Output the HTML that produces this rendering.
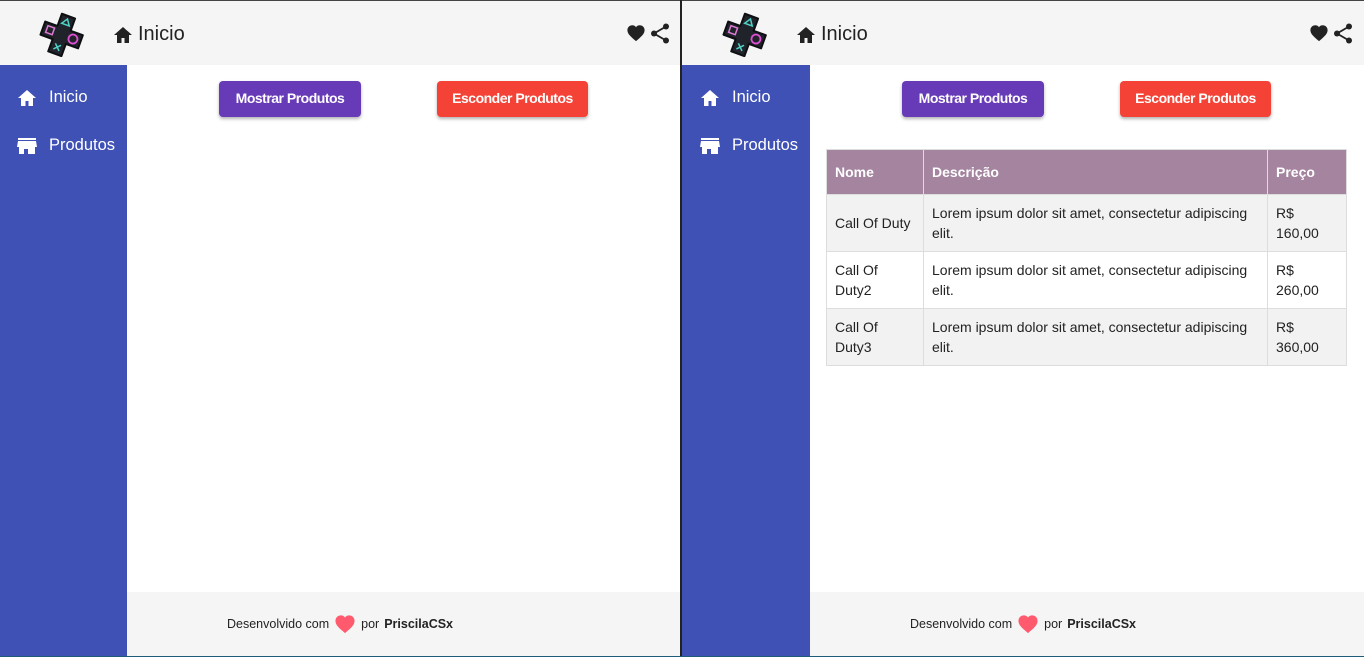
<!DOCTYPE html>
<html><head><meta charset="utf-8"><style>
*{box-sizing:border-box;margin:0;padding:0}
body{width:1364px;height:657px;position:relative;overflow:hidden;background:#fff;font-family:"Liberation Sans",Arial,sans-serif}
.pane{position:absolute;top:1px;height:655px;overflow:hidden;background:#fff}
.hdr{position:absolute;left:0;top:0;right:0;height:64px;background:#f5f5f5}
.side{position:absolute;left:0;top:64px;width:127px;bottom:0;background:#3f51b5;color:#fff}
.nav{position:absolute;left:17px;font-size:16.5px;display:flex;align-items:center;gap:12px}
.foot{position:absolute;left:127px;right:0;top:591px;bottom:0;background:#f5f5f5;font-size:12.5px;color:#222}
.ft{position:absolute;left:100px;top:22px;display:flex;align-items:center;gap:5px;white-space:nowrap}
.btn{position:absolute;top:80px;height:36px;color:#fff;font-weight:bold;font-size:14px;border-radius:4px;display:flex;align-items:center;justify-content:center;box-shadow:0 2px 3px rgba(0,0,0,.3);letter-spacing:-.5px;padding-bottom:2px}
.title{position:absolute;left:113px;top:22px;display:flex;align-items:center;gap:5px;font-size:20px;color:#222}
table{position:absolute;left:144px;top:148px;width:521px;border-collapse:collapse;font-size:14px;color:#222}
td,th{border:1px solid #ddd;padding:0 8px;text-align:left;vertical-align:middle;line-height:20px}
th{background:#a5849f;color:#fff;height:45px}
td{height:57px}
tr:nth-child(even) td{background:#f2f2f2}
</style></head><body>
<div style="position:absolute;left:0;top:0;width:1364px;height:1px;background:#444"></div>
<div style="position:absolute;left:680px;top:0;width:2px;height:657px;background:#222"></div>
<div style="position:absolute;left:0;top:656px;width:1364px;height:1px;background:#1e5a7a"></div>

<!-- LEFT -->
<div class="pane" style="left:0;width:680px">
 <div class="hdr">
  <svg style="position:absolute;left:37px;top:10px" width="50" height="46" viewBox="0 0 50 46">
   <g transform="rotate(20 25 23)">
    <path d="M18 4h14v13h13v14H32v13H18V31H5V17h13z" fill="#20242a" stroke="#0d0f12" stroke-width="2" stroke-linejoin="round"/>
    <path d="M25 7l4 6h-8z" fill="none" stroke="#4fd1c5" stroke-width="1.5"/>
    <rect x="9" y="20" width="7" height="7" fill="none" stroke="#e07ad6" stroke-width="1.5"/>
    <circle cx="37" cy="24" r="4.5" fill="none" stroke="#e04fd6" stroke-width="1.8"/>
    <path d="M22 34l6 6M28 34l-6 6" stroke="#4fd1c5" stroke-width="1.5"/>
   </g>
  </svg>
  <div class="title"><svg width="20" height="18" viewBox="0 0 20 18"><path d="M10 1L1 9h3v8h4.5v-5h3v5H16V9h3z" fill="#222"/></svg>Inicio</div>
  <svg style="position:absolute;left:626px;top:23px" width="20" height="18" viewBox="0 0 24 22"><path d="M12 21l-1.5-1.3C5 15 1.5 11.8 1.5 7.5 1.5 4 4.2 1.5 7.5 1.5c2 0 3.6 1 4.5 2.4C12.9 2.5 14.5 1.5 16.5 1.5c3.3 0 6 2.5 6 6 0 4.3-3.5 7.5-9 12.2z" fill="#222"/></svg>
  <svg style="position:absolute;left:650px;top:22px" width="20" height="21" viewBox="0 0 20 21"><circle cx="16" cy="3.5" r="3" fill="#222"/><circle cx="4" cy="10.5" r="3" fill="#222"/><circle cx="16" cy="17.5" r="3" fill="#222"/><path d="M16 3.5L4 10.5l12 7" stroke="#222" stroke-width="1.8" fill="none"/></svg>
 </div>
 <div class="side">
  <div class="nav" style="top:23px"><svg width="20" height="18" viewBox="0 0 20 18"><path d="M10 1L1 9h3v8h4.5v-5h3v5H16V9h3z" fill="#fff"/></svg>Inicio</div>
  <div class="nav" style="top:71px"><svg width="20" height="18" viewBox="0 0 20 18"><rect x="1" y="1" width="18" height="2" fill="#fff"/><path d="M0 10l1-6h18l1 6zM2 10h16v7h-7v-5H7v5H2z" fill="#fff"/></svg>Produtos</div>
 </div>
 <div class="btn" style="left:219px;width:142px;background:#673ab7">Mostrar Produtos</div>
 <div class="btn" style="left:437px;width:151px;background:#f44336">Esconder Produtos</div>
 <div class="foot"><div class="ft">Desenvolvido com <svg width="22" height="20" viewBox="0 0 24 22"><path d="M12 21l-1.5-1.3C5 15 1.5 11.8 1.5 7.5 1.5 4 4.2 1.5 7.5 1.5c2 0 3.6 1 4.5 2.4C12.9 2.5 14.5 1.5 16.5 1.5c3.3 0 6 2.5 6 6 0 4.3-3.5 7.5-9 12.2z" fill="#ff5a6e"/></svg> por <b>PriscilaCSx</b></div></div>
</div>

<!-- RIGHT -->
<div class="pane" style="left:682px;width:682px">
 <div class="hdr">
  <svg style="position:absolute;left:38px;top:10px" width="50" height="46" viewBox="0 0 50 46">
   <g transform="rotate(20 25 23)">
    <path d="M18 4h14v13h13v14H32v13H18V31H5V17h13z" fill="#20242a" stroke="#0d0f12" stroke-width="2" stroke-linejoin="round"/>
    <path d="M25 7l4 6h-8z" fill="none" stroke="#4fd1c5" stroke-width="1.5"/>
    <rect x="9" y="20" width="7" height="7" fill="none" stroke="#e07ad6" stroke-width="1.5"/>
    <circle cx="37" cy="24" r="4.5" fill="none" stroke="#e04fd6" stroke-width="1.8"/>
    <path d="M22 34l6 6M28 34l-6 6" stroke="#4fd1c5" stroke-width="1.5"/>
   </g>
  </svg>
  <div class="title" style="left:114px"><svg width="20" height="18" viewBox="0 0 20 18"><path d="M10 1L1 9h3v8h4.5v-5h3v5H16V9h3z" fill="#222"/></svg>Inicio</div>
  <svg style="position:absolute;left:627px;top:23px" width="20" height="18" viewBox="0 0 24 22"><path d="M12 21l-1.5-1.3C5 15 1.5 11.8 1.5 7.5 1.5 4 4.2 1.5 7.5 1.5c2 0 3.6 1 4.5 2.4C12.9 2.5 14.5 1.5 16.5 1.5c3.3 0 6 2.5 6 6 0 4.3-3.5 7.5-9 12.2z" fill="#222"/></svg>
  <svg style="position:absolute;left:651px;top:22px" width="20" height="21" viewBox="0 0 20 21"><circle cx="16" cy="3.5" r="3" fill="#222"/><circle cx="4" cy="10.5" r="3" fill="#222"/><circle cx="16" cy="17.5" r="3" fill="#222"/><path d="M16 3.5L4 10.5l12 7" stroke="#222" stroke-width="1.8" fill="none"/></svg>
 </div>
 <div class="side" style="width:128px">
  <div class="nav" style="top:23px;left:18px"><svg width="20" height="18" viewBox="0 0 20 18"><path d="M10 1L1 9h3v8h4.5v-5h3v5H16V9h3z" fill="#fff"/></svg>Inicio</div>
  <div class="nav" style="top:71px;left:18px"><svg width="20" height="18" viewBox="0 0 20 18"><rect x="1" y="1" width="18" height="2" fill="#fff"/><path d="M0 10l1-6h18l1 6zM2 10h16v7h-7v-5H7v5H2z" fill="#fff"/></svg>Produtos</div>
 </div>
 <div class="btn" style="left:220px;width:142px;background:#673ab7">Mostrar Produtos</div>
 <div class="btn" style="left:438px;width:151px;background:#f44336">Esconder Produtos</div>
 <table>
  <tr><th style="width:97px">Nome</th><th style="width:344px">Descrição</th><th>Preço</th></tr>
  <tr><td>Call Of Duty</td><td>Lorem ipsum dolor sit amet, consectetur adipiscing elit.</td><td>R$<br>160,00</td></tr>
  <tr><td>Call Of<br>Duty2</td><td>Lorem ipsum dolor sit amet, consectetur adipiscing elit.</td><td>R$<br>260,00</td></tr>
  <tr><td>Call Of<br>Duty3</td><td>Lorem ipsum dolor sit amet, consectetur adipiscing elit.</td><td>R$<br>360,00</td></tr>
 </table>
 <div class="foot" style="left:128px"><div class="ft">Desenvolvido com <svg width="22" height="20" viewBox="0 0 24 22"><path d="M12 21l-1.5-1.3C5 15 1.5 11.8 1.5 7.5 1.5 4 4.2 1.5 7.5 1.5c2 0 3.6 1 4.5 2.4C12.9 2.5 14.5 1.5 16.5 1.5c3.3 0 6 2.5 6 6 0 4.3-3.5 7.5-9 12.2z" fill="#ff5a6e"/></svg> por <b>PriscilaCSx</b></div></div>
</div>
</body></html>
